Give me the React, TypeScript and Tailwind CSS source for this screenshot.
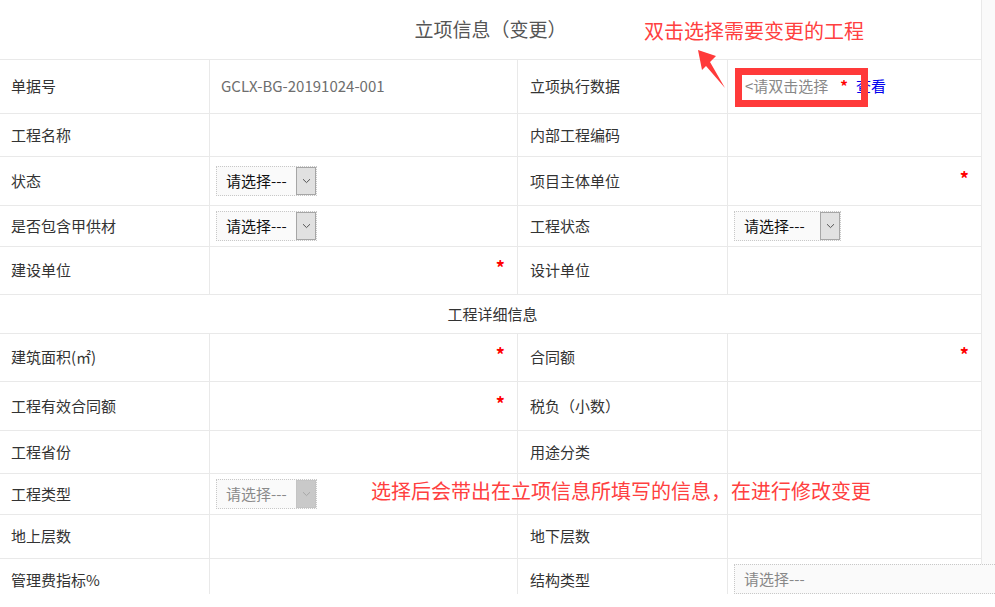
import React from 'react';

const font = "font-['Noto_Sans_CJK_SC','Microsoft_YaHei',sans-serif]";

type Cell =
  | { kind: 'text'; text: string; gray?: boolean }
  | { kind: 'star' }
  | { kind: 'select'; disabled?: boolean; wide?: boolean }
  | { kind: 'pick' }
  | { kind: 'wideSelect' }
  | { kind: 'empty' };

interface RowDef {
  h: string;
  a: string;
  b?: Cell;
  c: string;
  d?: Cell;
  last?: boolean;
}

const Chevron: React.FC<{ color: string }> = ({ color }) => (
  <svg width="9" height="6" viewBox="0 0 9 6" fill="none">
    <path d="M1 1.2 L4.5 4.6 L8 1.2" stroke={color} strokeWidth="1" />
  </svg>
);

const Select: React.FC<{ disabled?: boolean; wide?: boolean }> = ({ disabled, wide }) => (
  <div
    className={`flex h-[30px] shrink-0 border border-dotted border-[#c8c8c8] bg-[#fafafa] ${
      wide ? 'w-[107px]' : 'w-[101px]'
    }`}
  >
    <span
      className={`flex flex-1 items-center pl-[9px] text-[15px] ${
        disabled ? 'text-[#8a8a8a]' : 'text-[#111]'
      }`}
    >
      请选择---
    </span>
    <span
      className={`flex w-[20px] items-center justify-center border ${
        disabled ? 'border-[#c4c4c4] bg-[#c9c9c9]' : 'border-[#a6a6a6] bg-[#e1e1e1]'
      }`}
    >
      <Chevron color={disabled ? '#a8a8a8' : '#555'} />
    </span>
  </div>
);

const renderCell = (cell: Cell | undefined) => {
  if (!cell || cell.kind === 'empty') return null;
  switch (cell.kind) {
    case 'text':
      return (
        <span className={`pl-[11px] text-[15px] ${cell.gray ? 'text-[#6e6e6e]' : 'text-[#333]'}`}>
          {cell.text}
        </span>
      );
    case 'star':
      return (
        <span className="ml-auto pr-[12px] pb-[6px] text-[18px] font-bold text-[#ff0000]">*</span>
      );
    case 'select':
      return (
        <div className="pl-[6px]">
          <Select disabled={cell.disabled} wide={cell.wide} />
        </div>
      );
    case 'pick':
      return (
        <div className="flex items-center pl-[17px] text-[15px]">
          <span className="text-[#888]">&lt;请双击选择</span>
          <span className="ml-[12px] font-bold text-[#ff0000]">*</span>
          <span className="ml-[8px] text-[#0000ee]">查看</span>
        </div>
      );
    case 'wideSelect':
      return (
        <div className="relative z-10 ml-[6px] flex h-[30px] w-[275px] shrink-0 items-center border border-dotted border-[#c8c8c8] bg-[#fafafa] pl-[9px] text-[15px] text-[#888]">
          请选择---
        </div>
      );
  }
};

const rows: RowDef[] = [
  { h: 'h-[54px]', a: '单据号', b: { kind: 'text', text: 'GCLX-BG-20191024-001', gray: true }, c: '立项执行数据', d: { kind: 'pick' } },
  { h: 'h-[43px]', a: '工程名称', c: '内部工程编码' },
  { h: 'h-[49px]', a: '状态', b: { kind: 'select' }, c: '项目主体单位', d: { kind: 'star' } },
  { h: 'h-[41px]', a: '是否包含甲供材', b: { kind: 'select' }, c: '工程状态', d: { kind: 'select', wide: true } },
  { h: 'h-[48px]', a: '建设单位', b: { kind: 'star' }, c: '设计单位' },
];

const rows2: RowDef[] = [
  { h: 'h-[48px]', a: '建筑面积(㎡)', b: { kind: 'star' }, c: '合同额', d: { kind: 'star' } },
  { h: 'h-[49px]', a: '工程有效合同额', b: { kind: 'star' }, c: '税负（小数）' },
  { h: 'h-[43px]', a: '工程省份', c: '用途分类' },
  { h: 'h-[41px]', a: '工程类型', b: { kind: 'select', disabled: true }, c: '' },
  { h: 'h-[44px]', a: '地上层数', c: '地下层数' },
  { h: 'h-[35px]', a: '管理费指标%', c: '结构类型', d: { kind: 'wideSelect' }, last: true },
];

const Row: React.FC<{ row: RowDef }> = ({ row }) => {
  const base = `flex border-r border-[#e9e9e9] ${row.last ? 'items-start' : 'items-center border-b'} ${row.h}`;
  const labelPad = row.last ? 'pt-[10px]' : '';
  return (
    <div className="grid grid-cols-[210px_308px_210px_254px]">
      <div className={`${base} ${labelPad}`}>
        <span className="pl-[11px] text-[15px] text-[#333]">{row.a}</span>
      </div>
      <div className={`${base} ${labelPad}`}>{renderCell(row.b)}</div>
      <div className={`${base} ${labelPad}`}>
        <span className="pl-[12px] text-[15px] text-[#333]">{row.c}</span>
      </div>
      <div className={`${base} ${row.last ? 'pt-[5px]' : ''}`}>{renderCell(row.d)}</div>
    </div>
  );
};

export default function App() {
  return (
    <div className={`relative flex h-[594px] w-[995px] bg-white ${font}`}>
      <div className="w-[982px] shrink-0">
        <div className="flex h-[60px] items-center justify-center border-r border-b border-[#e9e9e9]">
          <span className="text-[19px] text-[#555]">立项信息（变更）</span>
        </div>
        {rows.map((r) => (
          <Row key={r.a} row={r} />
        ))}
        <div className="flex h-[39px] items-center justify-center border-r border-b border-[#e9e9e9] pl-[4px]">
          <span className="text-[15px] text-[#333]">工程详细信息</span>
        </div>
        {rows2.map((r) => (
          <Row key={r.a} row={r} />
        ))}
      </div>
      <div className="flex-1 bg-[#fafafa]" />

      {/* annotations */}
      <div className="pointer-events-none absolute left-[644px] top-[17px] text-[20px] leading-[28px] text-[#ff4040]">
        双击选择需要变更的工程
      </div>
      <div className="pointer-events-none absolute left-[735px] top-[68px] h-[39px] w-[133px] border-[7px] border-[#ff3a3a]" />
      <svg className="pointer-events-none absolute left-[690px] top-[44px]" width="40" height="50" viewBox="690 44 40 50">
        <polygon points="698,50 716,56 710,62 725,88 706,66 702,70" fill="#ff3a3a" />
      </svg>
      <div className="pointer-events-none absolute left-[371px] top-[477px] z-20 text-[20px] leading-[28px] text-[#ff4040]">
        选择后会带出在立项信息所填写的信息，在进行修改变更
      </div>
    </div>
  );
}
